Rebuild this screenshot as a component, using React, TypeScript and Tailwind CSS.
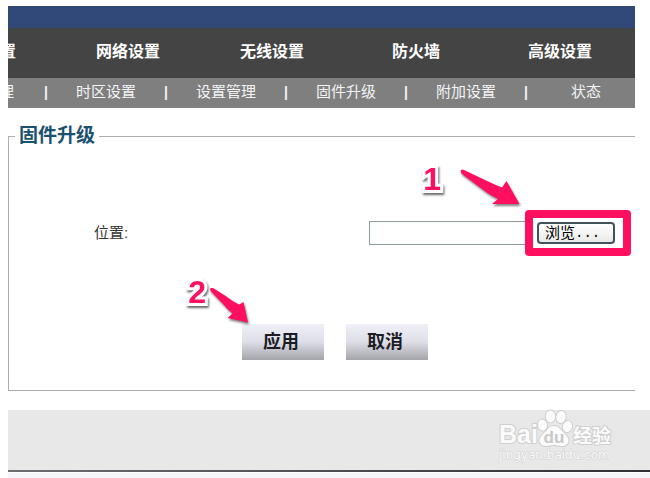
import { ReactNode } from 'react';

const mainMenu = ['网络设置', '无线设置', '防火墙', '高级设置'];
const subMenu = ['时区设置', '设置管理', '固件升级', '附加设置', '状态'];

function Header() {
  return (
    <header className="mr-[15px]">
      <div className="h-[22px] bg-[#304978]" />
      <nav className="flex h-[50px] items-center justify-end overflow-hidden bg-[#444444] pr-[3px] pb-0.5 text-base font-bold text-white">
        <a href="#" className="w-36 shrink-0 pr-10 text-right">置</a>
        {mainMenu.map((item) => (
          <a key={item} href="#" className="w-36 shrink-0 text-center">{item}</a>
        ))}
      </nav>
      <nav className="flex h-[30px] items-center overflow-hidden bg-[#7f7f7f] pb-0.5 text-[15px] text-gray-100">
        <a href="#" className="flex w-9 shrink-0 justify-end pr-[30px]">理</a>
        {subMenu.map((item) => (
          <span key={item} className="flex w-[120px] shrink-0 items-center">
            <span className="w-1 shrink-0 text-sm font-bold">|</span>
            <a href="#" className="flex-1 text-center">{item}</a>
          </span>
        ))}
      </nav>
    </header>
  );
}

function StepNumber({ children }: { children: ReactNode }) {
  return (
    <span className="text-[32px] leading-8 font-bold text-[#ff0f5f] [-webkit-text-stroke:6px_white] [paint-order:stroke_fill] [stroke-linejoin:round] drop-shadow-[1px_2px_1px_rgba(0,0,0,0.6)]">
      {children}
    </span>
  );
}

function FormButton({ children }: { children: ReactNode }) {
  return (
    <button
      type="button"
      className="h-9 w-[82px] bg-linear-to-b from-[#f0f0f8] via-[#dedee8] to-[#a4a4aa] pr-1 text-lg leading-9 font-bold text-[#1c1c24]"
    >
      {children}
    </button>
  );
}

function UpgradeForm() {
  return (
    <fieldset className="mt-[18px] mr-[15px] h-[265px] border border-r-0 border-[#acacac]">
      <legend className="ml-1.5 px-1 text-[19px] leading-5 font-bold text-[#1b5170]">
        固件升级
      </legend>
      <div className="mt-[75px] flex items-center pr-5 pl-[85px]">
        <label htmlFor="location" className="flex-1 text-[15px] text-[#333]">位置:</label>
        <input
          id="location"
          type="text"
          className="h-6 w-[164px] border border-[#8d9b9f] bg-white px-1 text-sm"
        />
        <div className="relative ml-1">
          <button
            type="button"
            className="flex h-[22px] w-[78px] items-center rounded border-2 border-[#42535b] bg-linear-to-b from-white to-[#e9ebe8] pl-1.5 text-[15px] leading-4 text-black"
          >
            浏览<span className="font-['Liberation_Mono',monospace] text-sm leading-4">...</span>
          </button>
          <div className="pointer-events-none absolute -top-3 -right-4 -bottom-3 -left-3 rounded border-8 border-[#ff0f5f]" />
          <div className="absolute -top-[59px] right-[174px]">
            <StepNumber>1</StepNumber>
          </div>
          <svg className="absolute -top-[54px] right-[94px] drop-shadow-[1px_2px_1px_rgba(0,0,0,0.5)]" width="62" height="40" viewBox="0 0 62 40">
            <path d="M2 2 Q3 1 5 2 L25 11.500 Q34 16 43 19.500 L47.500 13 L60.500 36 L33 36 L39 31 Q32 28 25 22.500 L3 6 Q1 4 2 2 Z" fill="#ff0f5f" />
          </svg>
        </div>
      </div>
      <div className="mt-[79px] flex justify-center gap-[22px] pl-[26px]">
        <div className="relative">
          <FormButton>应用</FormButton>
          <div className="absolute -top-12 right-[118px]">
            <StepNumber>2</StepNumber>
          </div>
          <svg className="absolute -top-9 right-[74px] drop-shadow-[1px_2px_1px_rgba(0,0,0,0.5)]" width="41" height="38" viewBox="0 0 41 38">
            <path d="M1 1 Q2 -1 4 0 L16 7.500 Q23 13 30 16.500 L34.500 14 L39 34.500 L18.500 30 L23.500 25.500 Q18 21 14 16 L1.500 3 Z" fill="#ff0f5f" />
          </svg>
        </div>
        <FormButton>取消</FormButton>
      </div>
    </fieldset>
  );
}

function Watermark() {
  return (
    <svg className="absolute -top-1 right-[34px]" width="120" height="58" viewBox="0 0 120 58">
      <g fill="#fbfbfb" stroke="#cfcfcf" strokeWidth="2" strokeLinejoin="round" paintOrder="stroke">
        <text x="3" y="37" fontSize="25" fontWeight="bold" className="font-['Liberation_Sans',sans-serif]">Bai</text>
        <ellipse cx="46.500" cy="19" rx="4.500" ry="5.500" transform="rotate(-12 46.500 19)" />
        <ellipse cx="54.500" cy="10.500" rx="4.700" ry="6" />
        <ellipse cx="65" cy="11" rx="4.700" ry="6" transform="rotate(10 65 11)" />
        <ellipse cx="71.500" cy="20.500" rx="4.500" ry="5.500" transform="rotate(12 71.500 20.500)" />
        <path d="M58 20 C64 20 65 25 69 28 C75 33 73 40 66 40 C62 40 61 39 58 39 C55 39 53 40 50 40 C43 40 41 33 47 28 C51 25 52 20 58 20 Z" />
        <text x="77" y="37" fontSize="19" fontWeight="bold" className="font-['Noto_Sans_CJK_SC',sans-serif]">经验</text>
        <text x="3" y="53" fontSize="12" strokeWidth="1" className="font-['DejaVu_Sans',sans-serif]">jingyan.baidu.com</text>
      </g>
      <text x="58" y="37" textAnchor="middle" fontSize="17" fontWeight="bold" fill="#c8c8c8" className="font-['Liberation_Sans',sans-serif]">du</text>
    </svg>
  );
}

export default function App() {
  return (
    <div className="min-h-screen overflow-hidden bg-white pt-1.5 pl-2 font-['Liberation_Sans','Noto_Sans_CJK_SC',sans-serif]">
      <Header />
      <UpgradeForm />
      <footer className="relative mt-[19px]">
        <div className="h-[60px] bg-[#e8e8e8]" />
        <div className="h-0.5 bg-linear-to-r from-[#6d6d72] to-[#303034]" />
        <div className="mt-px h-[5px] bg-[#f4f5fd]" />
        <Watermark />
      </footer>
    </div>
  );
}
